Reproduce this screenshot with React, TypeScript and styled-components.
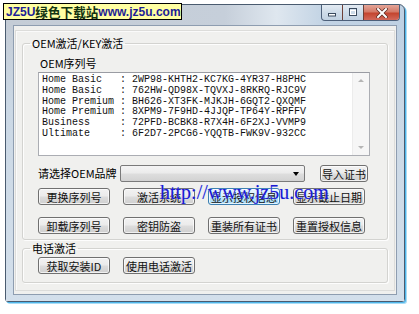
import React from 'react'
import styled, { createGlobalStyle } from 'styled-components'

const GlobalStyle = createGlobalStyle`
  html, body {
    margin: 0;
    padding: 0;
    background: #fff;
  }
  body {
    font-family: "Noto Sans CJK SC", "Liberation Sans", sans-serif;
    font-size: 11px;
    color: #000;
  }
`

const Page = styled.div`
  position: relative;
  width: 419px;
  height: 314px;
  overflow: hidden;
  box-sizing: border-box;
  padding: 4px 0 0 5px;
`

const Window = styled.div`
  width: 400px;
  height: 298px;
  box-sizing: border-box;
  display: flex;
  flex-direction: column;
  border: 1px solid #4a5b6f;
  border-radius: 6px 6px 3px 3px;
  background: linear-gradient(90deg, #c4ccd6 0%, #c6cfda 55%, #dfe7ef 68%, #c2d3e4 80%, #bfd1e3 100%);
  box-shadow: 1px 1px 0 #4fb6ea, 2px 2px 0 #a9dcf5;
`

const TitleBar = styled.div`
  height: 20px;
  display: flex;
  justify-content: flex-end;
  align-items: flex-start;
  padding-right: 4px;
`

const CaptionGroup = styled.div`
  display: flex;
  height: 15px;
  border: 1px solid #4d607a;
  border-top: none;
  border-radius: 0 0 4px 4px;
  overflow: hidden;
`

const CaptionButton = styled.div<{ $close?: boolean }>`
  width: ${p => (p.$close ? 35 : 20)}px;
  display: flex;
  align-items: center;
  justify-content: center;
  border-left: ${p => (p.$close ? '1px solid #6d4038' : 'none')};
  background: ${p =>
    p.$close
      ? 'linear-gradient(180deg, #e4a598 0%, #d47a68 45%, #c4452f 55%, #d2685a 100%)'
      : 'linear-gradient(180deg, rgba(255,255,255,0.55) 0%, rgba(255,255,255,0.2) 50%, rgba(190,205,220,0.3) 100%)'};
  & + & {
    border-left: 1px solid ${p => (p.$close ? '#6d4038' : '#8898ad')};
  }
`

const FrameBody = styled.div`
  flex: 1;
  display: flex;
  padding: 0 7px 6px 7px;
  background: linear-gradient(180deg, transparent 0%, #cbd8e5 30%, #d3dfeb 100%);
`

const Client = styled.div`
  flex: 1;
  display: flex;
  flex-direction: column;
  border: 1px solid #8e9db0;
  background: #f0f0ee;
`

const Panel = styled.div`
  flex: 1;
  margin: 4px 1px 3px 1px;
  border: 1px solid #dcdcda;
  box-shadow: inset 1px 1px 0 #fafafa;
  padding: 6px 6px 0 6px;
  display: flex;
  flex-direction: column;
  gap: 2px;
`

const Group = styled.fieldset`
  margin: 0;
  padding: 0;
  width: 366px;
  box-sizing: border-box;
  min-inline-size: 0;
  border: 1px solid #d3d3d0;
  border-radius: 3px;
  box-shadow: 1px 1px 0 #fdfdfd, inset 1px 1px 0 #fdfdfd;
`

const Legend = styled.legend`
  margin-left: 7px;
  padding: 0 2px;
  line-height: 12px;
  font-size: 11px;
`

const GroupBody = styled.div<{ $pt: number; $pb: number }>`
  padding: ${p => p.$pt}px 0 ${p => p.$pb}px 15px;
  display: flex;
  flex-direction: column;
`

const Caption = styled.div`
  line-height: 12px;
  margin-bottom: 3px;
  padding-left: 2px;
`

const KeyBox = styled.div`
  width: 332px;
  height: 84px;
  box-sizing: border-box;
  border: 1px solid #abadb3;
  border-top-color: #9a9ca3;
  background: #fff;
  display: flex;
`

const KeyText = styled.div`
  flex: 1;
  padding: 2px 3px;
  font-family: "Liberation Mono", monospace;
  font-size: 10px;
  line-height: 10.8px;
  white-space: pre;
  color: #111;
`

const ScrollBar = styled.div`
  width: 16px;
  background: #f6f6f6;
  border-left: 1px solid #ececec;
  display: flex;
  flex-direction: column;
  justify-content: space-between;
  align-items: center;
  padding: 6px 0;
`

const Arrow = styled.div<{ $down?: boolean }>`
  width: 0;
  height: 0;
  border-left: 3px solid transparent;
  border-right: 3px solid transparent;
  ${p => (p.$down ? 'border-top: 3px solid #b5b5b5;' : 'border-bottom: 3px solid #b5b5b5;')}
`

const Row = styled.div<{ $mt: number }>`
  display: flex;
  align-items: center;
  margin-top: ${p => p.$mt}px;
  gap: 13px;
`

const SelectLabel = styled.div`
  width: 69px;
  line-height: 17px;
  white-space: nowrap;
`

const Combo = styled.div`
  width: 185px;
  height: 17px;
  box-sizing: border-box;
  border: 1px solid #7a7a7a;
  border-radius: 2px;
  background: linear-gradient(180deg, #f4f4f4 0%, #ebebeb 48%, #dedede 52%, #d2d2d2 100%);
  display: flex;
  justify-content: flex-end;
  align-items: center;
  padding-right: 5px;
  margin-right: 2px;
`

const ComboArrow = styled.div`
  width: 0;
  height: 0;
  border-left: 3px solid transparent;
  border-right: 3px solid transparent;
  border-top: 4px solid #000;
`

const Button = styled.div<{ $w?: number; $hot?: boolean }>`
  width: ${p => p.$w ?? 72}px;
  height: 17px;
  box-sizing: border-box;
  border: 1px solid ${p => (p.$hot ? '#3c7fb1' : '#707070')};
  border-radius: 3px;
  background: ${p =>
    p.$hot
      ? 'linear-gradient(180deg, #eaf6fd 0%, #d9f0fc 48%, #bee6fd 52%, #a7d9f5 100%)'
      : 'linear-gradient(180deg, #f2f2f2 0%, #ebebeb 48%, #dddddd 52%, #cfcfcf 100%)'};
  box-shadow: inset 0 0 0 1px rgba(255, 255, 255, 0.7);
  display: flex;
  align-items: center;
  justify-content: center;
  line-height: 12px;
  white-space: nowrap;
  color: #111;
`

const Badge = styled.div`
  position: absolute;
  left: 3px;
  top: 3px;
  width: 179px;
  height: 17px;
  box-sizing: border-box;
  border: 1px solid #000;
  background: #ffffa2;
  display: flex;
  align-items: center;
  padding-left: 2px;
  font-weight: bold;
  white-space: nowrap;
`

const BadgeLatin = styled.span`
  font-family: "Liberation Sans", sans-serif;
  font-size: 12px;
  color: #1d1d96;
`

const BadgeCjk = styled.span`
  font-family: "Noto Sans CJK SC", sans-serif;
  font-size: 12.6px;
  line-height: 14px;
  color: #123312;
`

const Watermark = styled.div`
  position: absolute;
  left: 160px;
  top: 182px;
  font-family: "Liberation Serif", serif;
  font-size: 20px;
  line-height: 20px;
  color: #1a1ad2;
  text-shadow: 0 0 1px #b8c8ff;
  pointer-events: none;
  white-space: nowrap;
`

const keys = [
  'Home Basic   : 2WP98-KHTH2-KC7KG-4YR37-H8PHC',
  'Home Basic   : 762HW-QD98X-TQVXJ-8RKRQ-RJC9V',
  'Home Premium : BH626-XT3FK-MJKJH-6GQT2-QXQMF',
  'Home Premium : 8XPM9-7F9HD-4JJQP-TP64Y-RPFFV',
  'Business     : 72PFD-BCBK8-R7X4H-6F2XJ-VVMP9',
  'Ultimate     : 6F2D7-2PCG6-YQQTB-FWK9V-932CC',
]

const MinIcon = () => (
  <svg width="10" height="8" viewBox="0 0 10 8">
    <rect x="1.5" y="4.5" width="7" height="2.5" fill="#fff" stroke="#3a4a5e" />
  </svg>
)

const MaxIcon = () => (
  <svg width="10" height="9" viewBox="0 0 10 9">
    <rect x="1.5" y="0.5" width="7" height="7" fill="none" stroke="#3a4a5e" />
    <rect x="2.5" y="2.5" width="5" height="4" fill="none" stroke="#fff" />
  </svg>
)

const CloseIcon = () => (
  <svg width="12" height="10" viewBox="0 0 12 10">
    <path d="M2 1 L10 9 M10 1 L2 9" stroke="#5a2a22" strokeWidth="3.4" strokeLinecap="square" />
    <path d="M2 1 L10 9 M10 1 L2 9" stroke="#fff" strokeWidth="2" strokeLinecap="square" />
  </svg>
)

export default function App() {
  return (
    <Page>
      <GlobalStyle />
      <Window>
        <TitleBar>
          <CaptionGroup>
            <CaptionButton>
              <MinIcon />
            </CaptionButton>
            <CaptionButton>
              <MaxIcon />
            </CaptionButton>
            <CaptionButton $close>
              <CloseIcon />
            </CaptionButton>
          </CaptionGroup>
        </TitleBar>
        <FrameBody>
          <Client>
            <Panel>
              <Group>
                <Legend>OEM激活/KEY激活</Legend>
                <GroupBody $pt={8} $pb={5}>
                  <Caption>OEM序列号</Caption>
                  <KeyBox>
                    <KeyText>{keys.join('\n')}</KeyText>
                    <ScrollBar>
                      <Arrow />
                      <Arrow $down />
                    </ScrollBar>
                  </KeyBox>
                  <Row $mt={9}>
                    <SelectLabel>请选择OEM品牌</SelectLabel>
                    <Combo>
                      <ComboArrow />
                    </Combo>
                    <Button $w={48}>导入证书</Button>
                  </Row>
                  <Row $mt={6}>
                    <Button>更换序列号</Button>
                    <Button>激活系统</Button>
                    <Button $hot>显示授权信息</Button>
                    <Button>显示截止日期</Button>
                  </Row>
                  <Row $mt={12}>
                    <Button>卸载序列号</Button>
                    <Button>密钥防盗</Button>
                    <Button>重装所有证书</Button>
                    <Button>重置授权信息</Button>
                  </Row>
                </GroupBody>
              </Group>
              <Group>
                <Legend>电话激活</Legend>
                <GroupBody $pt={3} $pb={8}>
                  <Row $mt={0}>
                    <Button>获取安装ID</Button>
                    <Button>使用电话激活</Button>
                  </Row>
                </GroupBody>
              </Group>
            </Panel>
          </Client>
        </FrameBody>
      </Window>
      <Badge>
        <BadgeLatin>JZ5U</BadgeLatin>
        <BadgeCjk>绿色下载站</BadgeCjk>
        <BadgeLatin>www.jz5u.com</BadgeLatin>
      </Badge>
      <Watermark>http://www.jz5u.com</Watermark>
    </Page>
  )
}
